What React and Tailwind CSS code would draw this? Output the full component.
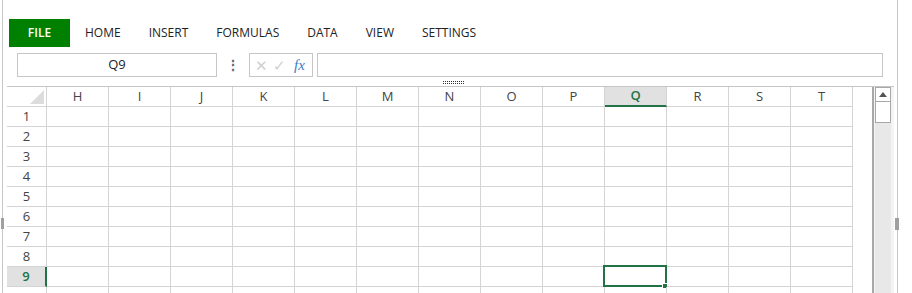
import React from "react";

const COLS = ["H", "I", "J", "K", "L", "M", "N", "O", "P", "Q", "R", "S", "T"];
const ROWS = [1, 2, 3, 4, 5, 6, 7, 8, 9, 10];
const MENU = ["HOME", "INSERT", "FORMULAS", "DATA", "VIEW", "SETTINGS"];

function Splitter() {
  // little dotted grip under the formula bar
  return (
    <svg width="22" height="3" className="block">
      {Array.from({ length: 11 }).map((_, i) => (
        <g key={i}>
          <rect x={i * 2} y="0" width="1" height="1" fill="#333" />
          <rect x={i * 2} y="2" width="1" height="1" fill="#333" />
        </g>
      ))}
    </svg>
  );
}

function ColumnHeader() {
  return (
    <div className="flex h-[20px]">
      <div className="w-[40px] h-[20px] border-r border-b border-[#d4d4d4] relative">
        <svg width="15" height="15" className="absolute left-[23px] top-[3px]">
          <polygon points="14,0 14,14 0,14" fill="#dcdcdc" />
        </svg>
      </div>
      {COLS.map((c) => {
        const active = c === "Q";
        return (
          <div
            key={c}
            className={
              active
                ? "w-[62px] h-[20px] border-r border-b-2 border-r-[#d4d4d4] border-b-[#217346] bg-[#e1e1e1] text-[#217346] font-semibold flex items-center justify-center text-[13px]"
                : "w-[62px] h-[20px] border-r border-b border-[#d4d4d4] text-[#444] flex items-center justify-center text-[13px]"
            }
          >
            {c}
          </div>
        );
      })}
    </div>
  );
}

function Row({ n }) {
  const active = n === 9;
  return (
    <div className="flex h-[20px]">
      <div
        className={
          active
            ? "w-[40px] h-[20px] border-r-2 border-b border-r-[#217346] border-b-[#d4d4d4] bg-[#e1e1e1] text-[#217346] font-semibold flex items-center justify-center text-[13px]"
            : "w-[40px] h-[20px] border-r border-b border-[#d4d4d4] text-[#444] flex items-center justify-center text-[13px]"
        }
      >
        {n < 10 ? n : ""}
      </div>
      {COLS.map((c) => (
        <div key={c} className="w-[62px] h-[20px] border-r border-b border-[#d4d4d4] relative">
          {active && c === "Q" && (
            <>
              <div className="absolute left-[-2px] top-[-2px] w-[64px] h-[22px] border-2 border-[#217346]" />
              <div className="absolute left-[57px] top-[16px] w-[6px] h-[6px] bg-[#217346] border border-white" />
            </>
          )}
        </div>
      ))}
    </div>
  );
}

export default function App() {
  return (
    <div
      className="w-[912px] h-[293px] bg-white overflow-hidden relative"
      style={{ fontFamily: '"Open Sans", "Noto Sans", sans-serif' }}
    >
      {/* side grips */}
      <div className="absolute left-[1px] top-[218px] w-[3px] h-[11px] bg-[#a0a0a0]" />
      <div className="absolute left-[895px] top-[218px] w-[4px] h-[12px] bg-[#a0a0a0]" />

      <div className="ml-[2px] w-[896px] h-full border-l border-r border-[#c6c6c6]">

        {/* Ribbon tabs */}
        <div className="pt-[19px] pl-[6px] flex items-center">
          <div className="w-[61px] h-[28px] bg-[#008000] text-white text-[12px] font-semibold flex items-center justify-center">
            FILE
          </div>
          <div className="flex gap-[28px] ml-[15px] text-[12px] text-[#222]">
            {MENU.map((m) => (
              <span key={m}>{m}</span>
            ))}
          </div>
        </div>

        {/* Formula bar */}
        <div className="mt-[6px] pl-[14px] flex items-center">
          <div className="w-[200px] h-[24px] border border-[#c6c6c6] flex items-center justify-center text-[13px] text-[#222]">
            Q9
          </div>
          <div className="w-[32px] flex justify-center text-[14px] text-[#666] font-bold leading-none">⋮</div>
          <div className="w-[64px] h-[24px] border border-[#c6c6c6] flex items-center pl-[5px] gap-[5px]">
            <span className="text-[15px] text-[#d0d0d0] leading-none">✕</span>
            <span className="text-[15px] text-[#d0d0d0] leading-none">✓</span>
            <span className="ml-[3px] text-[15px] italic text-[#3a7dc9]" style={{ fontFamily: '"Liberation Serif", serif' }}>
              fx
            </span>
          </div>
          <div className="ml-[4px] w-[566px] h-[24px] border border-[#c6c6c6]" />
        </div>

        {/* splitter */}
        <div className="h-[9px] flex items-start justify-center pt-[4px] pl-[8px]">
          <Splitter />
        </div>

        {/* Grid */}
        <div className="ml-[4px] w-[887px] border-t border-[#c6c6c6] flex">
          <div className="w-[846px]">
            <ColumnHeader />
            {ROWS.map((n) => (
              <Row key={n} n={n} />
            ))}
          </div>
          <div className="w-[19px]" />
          <div className="w-[22px] h-[220px] border-l-2 border-[#a8a8a8] bg-[#f4f4f4] pl-[1px]">
            <div className="w-[16px] h-full bg-[#e8e8e8]">
              <div className="h-[15px] bg-white border border-[#a8a8a8] flex items-center justify-center">
                <svg width="8" height="5">
                  <polygon points="4,0 8,5 0,5" fill="#555" />
                </svg>
              </div>
              <div className="h-[21px] bg-white border border-t-0 border-[#a8a8a8]" />
            </div>
          </div>
        </div>
      </div>
    </div>
  );
}
